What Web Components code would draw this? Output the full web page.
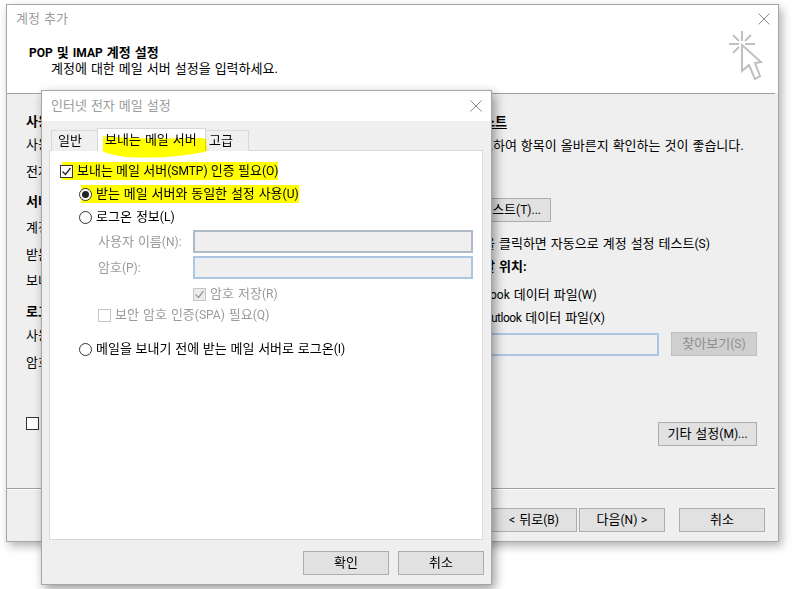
<!DOCTYPE html>
<html lang="ko">
<head>
<meta charset="utf-8">
<title>계정 추가</title>
<style>
html, body { margin: 0; background: #fff; }
body { font: 13px/18px Roboto, "Noto Sans CJK KR", sans-serif; word-spacing: .8px; color: #000; }
</style>
</head>
<body>
<mail-desktop>
  <wizard-window></wizard-window>
  <settings-dialog></settings-dialog>
</mail-desktop>

<script>
const define = (name, css, html) => {
  class Comp extends HTMLElement {
    constructor() {
      super();
      this.attachShadow({ mode: "open" });
      const t = document.createElement("template");
      t.innerHTML = `<style>${css}</style>${html}`;
      this.shadowRoot.appendChild(t.content.cloneNode(true));
    }
  }
  customElements.define(name, Comp);
};

define("mail-desktop", `
  :host { display: block; position: relative; width: 801px; height: 589px; overflow: hidden; background: #fff; }
`, `<slot></slot>`);

// latin runs are set a size down, the hangul needs 13px to get its advance
define("win-latin", `:host { font-size: 12px; }`, `<slot></slot>`);

define("win-title", `
  :host { display: flex; align-items: center; justify-content: space-between; color: #9b9b9b; }
  svg { display: block; }
`, `<slot></slot>
  <svg width="12" height="12" viewBox="0 0 12 12"><path d="M.5 .5L11.5 11.5M11.5 .5L.5 11.5" stroke="#8a8a8a" fill="none"/></svg>`);

define("win-button", `
  :host { display: flex; align-items: center; justify-content: center; box-sizing: border-box; width: 86px; height: 24px;
    background: #e1e1e1; border: 1px solid #adadad; white-space: nowrap; flex: none; }
  :host([disabled]) { background: #cfcfcf; border-color: #c0c0c0; color: #8e8e8e; }
`, `<span><slot></slot></span>`);

define("win-field", `
  :host { display: block; box-sizing: border-box; height: 23px; background: #efefef; border: 2px solid #b0b9c6; flex: none; }
  :host([focus]) { border-color: #acc6e4; }
`, ``);

define("win-option", `
  :host { display: flex; align-items: center; height: 18px; white-space: nowrap; }
  :host([disabled]) { color: #9a9a9a; }
  .box { position: relative; z-index: 1; flex: none; box-sizing: border-box; width: 13px; height: 13px; background: #fff; border: 1px solid #333; display: flex; align-items: center; justify-content: center; }
  :host([radio]) .box { border-radius: 50%; }
  :host([disabled]) .box { border-color: #c4c4c4; }
  :host([disabled][checked]) .box { background: #ececec; }
  svg { display: none; }
  :host([checked]) svg { display: block; }
  .dot { display: none; width: 7px; height: 7px; border-radius: 50%; background: #222; }
  :host([radio][checked]) .dot { display: block; }
  :host([radio]) svg { display: none !important; }
  :host([disabled]) path { stroke: #9a9a9a; }
  .label { margin-left: var(--label-gap, 4px); }
  :host([marked]) .label { background: #ff0; padding: 0 0 0 var(--mark-lead, 15px); margin-left: calc(var(--label-gap, 4px) - var(--mark-lead, 15px)); }
`, `<span class="box"><svg width="11" height="11" viewBox="0 0 11 11"><path d="M1.5 5.5L4.5 8.5L9.5 2" fill="none" stroke="#222" stroke-width="1.3"/></svg><span class="dot"></span></span><span class="label"><slot></slot></span>`);

define("click-icon", `
  :host { display: block; flex: none; width: 40px; height: 52px; }
  svg { display: block; }
`, `<svg width="40" height="52" viewBox="728 38 40 52" fill="none" stroke="#c0c0c0" stroke-width="2">
  <path d="M744 40V50M744 56V60M731 53H741M747 53H757M735 44L741 50M753 44L747 50M735 62L741 56"/>
  <path d="M744 54L763 71L757 72L762 85L757 88L751 74L744 80Z"/>
</svg>`);

// only what shows beside the dialog is written here, the rest of each label lies under it
define("wizard-window", `
  :host { display: flex; flex-direction: column; position: absolute; z-index: 1; left: 6px; top: 4px; width: 773px; height: 538px; box-sizing: border-box;
    border: 1px solid #a6a6a6; background: #efefef; box-shadow: 3px 4px 9px rgba(0,0,0,.3); }
  header { background: #fff; height: 88px; padding: 5px 8px 0 9px; flex: none; box-sizing: border-box; position: relative; }
  win-title { height: 18px; }
  .head { display: flex; justify-content: space-between; margin-top: 17px; padding-left: 13px; padding-right: 4px; }
  h1 { font-size: 13px; line-height: 15px; font-weight: 700; margin: 0; }
  .sub { margin-left: 22px; line-height: 15px; }
  .line { height: 1px; background: #a0a0a0; flex: none; margin-right: 3px; }
  .body { flex: 1; display: grid; grid-template-columns: 15px 1fr; column-gap: 419px; overflow: hidden; padding-left: 19px; }
  .col { display: flex; flex-direction: column; padding-top: 19px; }
  .col > * { height: 18px; white-space: nowrap; flex: none; }
  b { font-weight: 700; }
  u { text-underline-offset: 2px; }
  .row { display: flex; align-items: center; }
  .row win-field { width: 199px; margin-right: 12px; }
  footer { flex: none; height: 53px; border-top: 1px solid #a0a0a0; box-shadow: inset 0 1px 0 #fff; margin-right: 3px; display: flex; align-items: flex-start; justify-content: flex-end; padding: 19px 10px 0 0; box-sizing: border-box; }
  footer win-button + win-button { margin-left: 2px; }
  footer .cancel { margin-left: 14px !important; }
`, `
  <header>
    <win-title>계정 추가</win-title>
    <div class="head">
      <div><h1><win-latin>POP</win-latin> 및 <win-latin>IMAP</win-latin> 계정 설정</h1><div class="sub">계정에 대한 메일 서버 설정을 입력하세요.</div></div>
      <click-icon style="margin-top:-16px"></click-icon>
    </div>
  </header>
  <div class="line"></div>
  <div class="body">
    <div class="col">
      <b>사용</b>
      <div style="margin-top:5px">사용</div>
      <div style="margin-top:9px">전자</div>
      <b style="margin-top:12px">서버</b>
      <div style="margin-top:8px">계정</div>
      <div style="margin-top:9px">받는</div>
      <div style="margin-top:8px">보내</div>
      <b style="margin-top:13px">로그</b>
      <div style="margin-top:6px">사용</div>
      <div style="margin-top:9px">암호</div>
      <win-option style="margin-top:42px"></win-option>
    </div>
    <div class="col">
      <b style="margin-left:11px"><u>테스트</u></b>
      <div style="margin-top:6px;margin-left:9px">스트하여 항목이 올바른지 확인하는 것이 좋습니다.</div>
      <win-button style="margin-top:43px;width:91px;height:24px;justify-content:flex-end;padding-right:9px">테스트<win-latin>(T)...</win-latin></win-button>
      <div style="margin-top:13px;margin-left:23px">을 클릭하면 자동으로 계정 설정 테스트<win-latin>(S)</win-latin></div>
      <b style="margin-top:5px;margin-left:23px">달 위치:</b>
      <div style="margin-top:10px;margin-left:30px"><win-latin>ook</win-latin> 데이터 파일<win-latin>(W)</win-latin></div>
      <div style="margin-top:5px;margin-left:31px"><win-latin style="letter-spacing:-.5px">utlook</win-latin> 데이터 파일<win-latin>(X)</win-latin></div>
      <div class="row" style="margin-top:5px;height:24px"><win-field focus></win-field><win-button disabled>찾아보기<win-latin>(S)</win-latin></win-button></div>
      <div class="row" style="margin-top:66px;height:24px;justify-content:flex-end;padding-right:21px"><win-button style="width:99px">기타 설정<win-latin>(M)...</win-latin></win-button></div>
    </div>
  </div>
  <footer>
    <win-button><win-latin>&lt;</win-latin> 뒤로<win-latin>(B)</win-latin></win-button>
    <win-button>다음<win-latin>(N) &gt;</win-latin></win-button>
    <win-button class="cancel">취소</win-button>
  </footer>
`);

define("settings-dialog", `
  :host { display: flex; flex-direction: column; position: absolute; z-index: 2; left: 41px; top: 90px; width: 451px; height: 495px; box-sizing: border-box;
    border: 1px solid #a6a6a6; background: #efefef; box-shadow: 3px 4px 10px rgba(0,0,0,.4); }
  win-title { background: #fff; height: 30px; padding: 0 9px; flex: none; }
  .tabs { display: flex; height: 30px; padding: 0 0 0 9px; align-items: flex-end; flex: none; margin-bottom: -1px; position: relative; z-index: 1; }
  .tab { box-sizing: border-box; height: 21px; border: 1px solid #d9d9d9; border-bottom: 0; display: flex; align-items: center; background: #efefef; }
  .tab.on { height: 23px; background: #fff; margin: 0 -1px; position: relative; z-index: 1; }
  .panel { box-sizing: border-box; flex: none; height: 390px; margin: 0 8px 0 7px; border: 1px solid #d9d9d9; background: #fff; padding: 11px 0 0 10px; display: flex; flex-direction: column; }
  .l1 { margin-left: 19px; }
  .grid { display: grid; grid-template-columns: 95px 280px; margin: 4px 0 0 38px; row-gap: 3px; align-items: center; color: #9a9a9a; }
  .grid win-field { height: 23px; }
  .foot { display: flex; justify-content: flex-end; gap: 9px; padding: 11px 7px 0 0; }
  svg.scribble { position: absolute; left: -41px; top: -90px; width: 801px; height: 589px; pointer-events: none; mix-blend-mode: multiply; z-index: 3; }
`, `
  <win-title>인터넷 전자 메일 설정</win-title>
  <div class="tabs">
    <div class="tab" style="width:47px;padding-left:6px">일반</div>
    <div class="tab on" style="width:109px;padding-left:7px">보내는 메일 서버</div>
    <div class="tab" style="width:44px;padding-left:3px">고급</div>
  </div>
  <div class="panel">
    <win-option checked marked style="--mark-lead:15px;word-spacing:0">보내는 메일 서버<win-latin>(SMTP)</win-latin> 인증 필요<win-latin>(O)</win-latin></win-option>
    <win-option class="l1" radio checked marked style="margin-top:5px;--mark-lead:15px;word-spacing:.6px">받는 메일 서버와 동일한 설정 사용<win-latin>(U)</win-latin></win-option>
    <win-option class="l1" radio style="margin-top:5px">로그온 정보<win-latin>(L)</win-latin></win-option>
    <div class="grid">
      <span>사용자 이름<win-latin>(N):</win-latin></span><win-field></win-field>
      <span>암호<win-latin>(P):</win-latin></span><win-field focus></win-field>
    </div>
    <win-option disabled checked style="margin:6px 0 0 133px">암호 저장<win-latin>(R)</win-latin></win-option>
    <win-option disabled style="margin:3px 0 0 38px">보안 암호 인증<win-latin>(SPA)</win-latin> 필요<win-latin>(Q)</win-latin></win-option>
    <win-option class="l1" radio style="margin-top:16px;word-spacing:.5px">메일을 보내기 전에 받는 메일 서버로 로그온<win-latin>(I)</win-latin></win-option>
  </div>
  <div class="foot"><win-button>확인</win-button><win-button>취소</win-button></div>
  <svg class="scribble" viewBox="0 0 801 589"><path d="M102 135C130 138 170 138 200 137L205 138L206 150C190 155 150 158 125 156C112 154 103 152 102 150Z" fill="#ff0"/></svg>
`);
</script>
</body>
</html>
